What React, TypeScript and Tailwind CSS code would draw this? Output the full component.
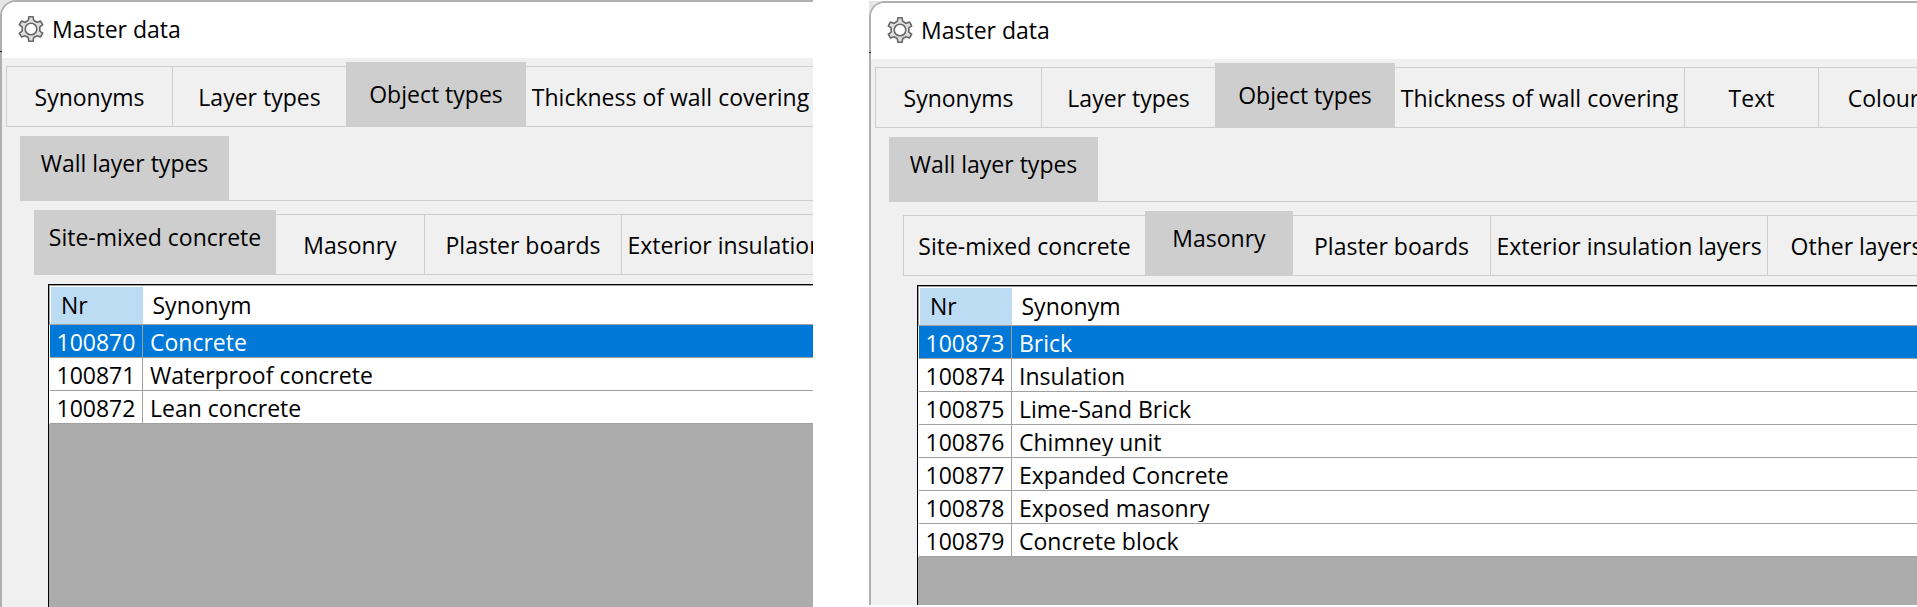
import React from "react";

type Tab = { label: string; width: string };
type Row = { nr: number; synonym: string };

const mainTabs: Tab[] = [
  { label: "Synonyms", width: "w-[166px]" },
  { label: "Layer types", width: "w-[174px]" },
  { label: "Object types", width: "w-[180px]" },
  { label: "Thickness of wall covering", width: "w-[289px]" },
  { label: "Text", width: "w-[134px]" },
  { label: "Colour", width: "w-[130px]" },
];

const groupTabs: Tab[] = [{ label: "Wall layer types", width: "w-[209px]" }];

const layerTabs: Tab[] = [
  { label: "Site-mixed concrete", width: "w-[242px]" },
  { label: "Masonry", width: "w-[148px]" },
  { label: "Plaster boards", width: "w-[197px]" },
  { label: "Exterior insulation layers", width: "w-[277px]" },
  { label: "Other layers", width: "w-[178px]" },
];

const concreteRows: Row[] = [
  { nr: 100870, synonym: "Concrete" },
  { nr: 100871, synonym: "Waterproof concrete" },
  { nr: 100872, synonym: "Lean concrete" },
];

const masonryRows: Row[] = [
  { nr: 100873, synonym: "Brick" },
  { nr: 100874, synonym: "Insulation" },
  { nr: 100875, synonym: "Lime-Sand Brick" },
  { nr: 100876, synonym: "Chimney unit" },
  { nr: 100877, synonym: "Expanded Concrete" },
  { nr: 100878, synonym: "Exposed masonry" },
  { nr: 100879, synonym: "Concrete block" },
];

// Six-toothed gear outline, one tooth pointing straight up.
function gearPath(): string {
  const at = (r: number, deg: number) => {
    const a = (deg * Math.PI) / 180;
    return `${(13 + r * Math.sin(a)).toFixed(2)} ${(13 - r * Math.cos(a)).toFixed(2)}`;
  };
  let d = "";
  for (let k = 0; k < 6; k++) {
    const c = k * 60;
    d += `${k === 0 ? "M" : "L"}${at(12.4, c - 10)} L${at(12.4, c + 10)} L${at(9.8, c + 15)} Q${at(8.6, c + 18)} ${at(8.9, c + 24)} L${at(8.9, c + 36)} Q${at(8.6, c + 42)} ${at(9.8, c + 45)} `;
  }
  return d + "Z";
}

function GearIcon() {
  return (
    <svg viewBox="0 0 26 26" className="size-[26px] shrink-0" aria-hidden="true">
      <path
        d={gearPath()}
        fill="#dedede"
        stroke="#666"
        strokeWidth="1.6"
        strokeLinejoin="round"
      />
      <circle cx="13" cy="13" r="5.8" fill="#fff" stroke="#666" strokeWidth="1.6" />
    </svg>
  );
}

function TabStrip({
  label,
  tabs,
  selected,
  className,
  selectedPadding,
}: {
  label: string;
  tabs: Tab[];
  selected: string;
  className: string;
  selectedPadding: string;
}) {
  return (
    <div role="tablist" aria-label={label} className={`flex h-[65px] items-end ${className}`}>
      {tabs.map((tab, i) => {
        const active = tab.label === selected;
        const afterActive = i > 0 && tabs[i - 1].label === selected;
        return (
          <button
            key={tab.label}
            type="button"
            role="tab"
            aria-selected={active}
            className={`flex shrink-0 items-start justify-center whitespace-nowrap ${tab.width} ${
              active
                ? `h-[65px] bg-[#cecece] ${selectedPadding}`
                : `h-[61px] border-y border-[#cecece] pt-[15px] ${afterActive ? "" : "border-l"}`
            }`}
          >
            {tab.label}
          </button>
        );
      })}
      <div className="h-px grow bg-[#cecece]" />
    </div>
  );
}

function SynonymTable({ rows }: { rows: Row[] }) {
  return (
    <div className="ml-[46px] grow border-t border-l border-black bg-[#ababab]">
      <table className="w-full table-fixed border-collapse bg-white text-left">
        <colgroup>
          <col className="w-[93px]" />
          <col />
        </colgroup>
        <thead>
          <tr className="h-[39px] border-y border-[#a0a0a0]">
            <th className="border-l border-[#a0a0a0] p-0 font-normal">
              <div className="mt-px ml-px h-[37px] bg-[#bcdcf4] pt-[3px] pl-[10px]">Nr</div>
            </th>
            <th className="p-0 font-normal">
              <div className="mt-px h-[37px] pt-[3px] pl-[10px]">Synonym</div>
            </th>
          </tr>
        </thead>
        <tbody>
          {rows.map((row, i) => (
            <tr
              key={row.nr}
              className={`h-[33px] border-b border-[#a0a0a0] ${i === 0 ? "bg-[#0078d7] text-white" : ""}`}
            >
              <td className="border-r border-[#a0a0a0] p-0 pl-[7px]">
                <div className="h-[30px] overflow-hidden pt-px">{row.nr}</div>
              </td>
              <td className="p-0 pl-[7px]">
                <div className="h-[30px] overflow-hidden pt-px">{row.synonym}</div>
              </td>
            </tr>
          ))}
        </tbody>
      </table>
    </div>
  );
}

function MasterDataWindow({
  layer,
  rows,
  className,
}: {
  layer: string;
  rows: Row[];
  className: string;
}) {
  return (
    <div className={`relative flex min-w-0 overflow-hidden bg-[#e6e6e6] ${className}`}>
      <section className="flex min-w-0 grow flex-col overflow-hidden rounded-tl-2xl border-t-2 border-l-2 border-[#b0b0b0] bg-[#f0f0f0]">
        <header className="flex h-14 shrink-0 items-center gap-2 bg-white pb-[2px] pl-4">
          <GearIcon />
          <h1>Master data</h1>
        </header>
        <div className="flex grow flex-col gap-[9px] pt-1">
          <TabStrip
            label="Master data"
            tabs={mainTabs}
            selected="Object types"
            className="ml-1"
            selectedPadding="pt-[17px]"
          />
          <TabStrip
            label="Object types"
            tabs={groupTabs}
            selected="Wall layer types"
            className="ml-[18px]"
            selectedPadding="pt-3"
          />
          <TabStrip
            label="Wall layer types"
            tabs={layerTabs}
            selected={layer}
            className="ml-8"
            selectedPadding="pt-3"
          />
          <SynonymTable rows={rows} />
        </div>
      </section>
      <div className="absolute top-[51px] left-0 h-px w-[2px] bg-[#202020]" />
    </div>
  );
}

export default function App() {
  return (
    <main className="grid min-h-screen grid-cols-[813fr_1048fr] gap-14 overflow-hidden bg-white font-['Open_Sans','Noto_Sans',sans-serif] text-[23px] leading-[30px] text-black">
      <MasterDataWindow layer="Site-mixed concrete" rows={concreteRows} className="" />
      <MasterDataWindow layer="Masonry" rows={masonryRows} className="mt-px mb-[2px]" />
    </main>
  );
}
